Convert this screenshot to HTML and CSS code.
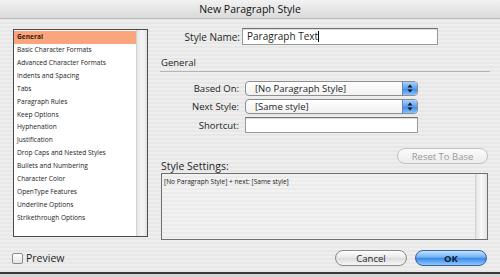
FILE: index.html
```html
<!DOCTYPE html>
<html lang="en">
<head>
  <meta charset="UTF-8">
  <title>New Paragraph Style</title>
  <link rel="stylesheet" href="styles.css">
</head>
<body>
  <div class="dialog">
    <div class="titlebar">New Paragraph Style</div>

    <div class="main">
      <!-- Category list -->
      <div class="list">
        <ul class="items">
          <li class="selected">General</li>
          <li>Basic Character Formats</li>
          <li>Advanced Character Formats</li>
          <li>Indents and Spacing</li>
          <li>Tabs</li>
          <li>Paragraph Rules</li>
          <li>Keep Options</li>
          <li>Hyphenation</li>
          <li>Justification</li>
          <li>Drop Caps and Nested Styles</li>
          <li>Bullets and Numbering</li>
          <li>Character Color</li>
          <li>OpenType Features</li>
          <li>Underline Options</li>
          <li>Strikethrough Options</li>
        </ul>
        <div class="track"></div>
      </div>

      <div class="panel">
        <div class="name-row">
          <label class="name-label">Style Name:</label>
          <div class="text-input name-input">Paragraph Text<span class="caret"></span></div>
        </div>

        <div class="section-title">General</div>

        <div class="form-row">
          <label class="field-label">Based On:</label>
          <div class="popup">
            <span class="popup-text">[No Paragraph Style]</span>
            <span class="popup-arrows">
              <svg width="6" height="9" viewBox="0 0 6 9"><polygon points="3,0.5 5.5,3.5 0.5,3.5" fill="#111"/><polygon points="0.5,5.5 5.5,5.5 3,8.5" fill="#111"/></svg>
            </span>
          </div>
        </div>
        <div class="form-row">
          <label class="field-label">Next Style:</label>
          <div class="popup">
            <span class="popup-text">[Same style]</span>
            <span class="popup-arrows">
              <svg width="6" height="9" viewBox="0 0 6 9"><polygon points="3,0.5 5.5,3.5 0.5,3.5" fill="#111"/><polygon points="0.5,5.5 5.5,5.5 3,8.5" fill="#111"/></svg>
            </span>
          </div>
        </div>
        <div class="form-row">
          <label class="field-label">Shortcut:</label>
          <div class="text-input shortcut-input"></div>
        </div>

        <div class="settings-head">
          <span class="settings-label">Style Settings:</span>
          <button class="btn btn-disabled">Reset To Base</button>
        </div>
        <div class="settings-box">
          <div class="settings-text">[No Paragraph Style] + next: [Same style]</div>
          <div class="settings-track"></div>
        </div>
      </div>
    </div>

    <div class="footer">
      <label class="preview"><span class="checkbox"></span>Preview</label>
      <div class="buttons">
        <button class="btn">Cancel</button>
        <button class="btn btn-default">OK</button>
      </div>
    </div>
  </div>
</body>
</html>
```

FILE: styles.css
```css
* {
  box-sizing: border-box;
  margin: 0;
  padding: 0;
}

body {
  width: 500px;
  height: 277px;
  background: #d6d6d6;
  font-family: 'Open Sans', 'DejaVu Sans', sans-serif;
  color: #1e1e1e;
  overflow: hidden;
}

.dialog {
  width: 500px;
  height: 274px;
  border-bottom: 2px solid #3a3a3a;
  background: repeating-linear-gradient(#eeeeee 0, #eeeeee 2px, #e7e7e7 2px, #e7e7e7 4px);
  display: flex;
  flex-direction: column;
}

.titlebar {
  height: 19px;
  line-height: 19px;
  text-align: center;
  font-size: 10.5px;
  font-weight: 500;
  color: #111;
  background: linear-gradient(#f2f2f2, #dadada);
  border-bottom: 1px solid #b8b8b8;
}

.main {
  display: flex;
  gap: 13px;
  padding: 10px 12px 0 13px;
}

/* left list */
.list {
  width: 135px;
  height: 208px;
  border: 1px solid #4a4a4a;
  background: #fff;
  display: flex;
}

.items {
  list-style: none;
  flex: 1;
  padding-top: 1px;
}

.items li {
  height: 12.93px;
  line-height: 12.93px;
  padding-left: 3px;
  font-size: 6.6px;
  font-weight: 500;
  color: #222;
  white-space: nowrap;
}

.items li.selected {
  background: #fba57c;
  color: #3a1a08;
  font-weight: 700;
}

.track {
  width: 11px;
  background: linear-gradient(90deg, #e4e4e4, #f6f6f6 50%, #e2e2e2);
  border-left: 1px solid #d2d2d2;
}

/* right panel */
.panel {
  width: 327px;
  display: flex;
  flex-direction: column;
}

.name-row {
  display: flex;
  align-items: center;
  margin-top: -1px;
}

.name-label {
  width: 81px;
  padding-right: 2px;
  text-align: right;
  font-size: 10px;
}

.text-input {
  background: #fff;
  border: 1px solid #9a9a9a;
  border-top-color: #707070;
  box-shadow: inset 0 1px 1px rgba(0, 0, 0, 0.15);
}

.name-input {
  width: 196px;
  height: 17px;
  line-height: 15px;
  padding-left: 4px;
  font-size: 10px;
}

.caret {
  display: inline-block;
  width: 1px;
  height: 11px;
  background: #000;
  vertical-align: -2px;
}

.section-title {
  margin-top: 11px;
  padding: 0 0 2px 1px;
  font-size: 9.5px;
  border-bottom: 1px solid #b4b4b4;
  margin-right: -2px;
  margin-left: -1px;
  margin-bottom: 9px;
}

.form-row {
  display: flex;
  align-items: center;
  gap: 6px;
  margin-bottom: 3px;
}

.field-label {
  width: 78px;
  text-align: right;
  font-size: 9.5px;
}

.popup {
  width: 173px;
  height: 15px;
  display: flex;
  background: linear-gradient(#ffffff, #f1f1f1);
  border: 1px solid #8e8e8e;
  border-radius: 4px;
  overflow: hidden;
}

.popup-text {
  flex: 1;
  padding-left: 9px;
  font-size: 9.5px;
  line-height: 13px;
}

.popup-arrows {
  width: 15px;
  display: flex;
  align-items: center;
  justify-content: center;
  background: linear-gradient(#a9d2fb, #5a9ff0 50%, #3b86e4 51%, #8cc4fa);
  border-left: 1px solid #5f86b8;
}

.shortcut-input {
  width: 173px;
  height: 16px;
}

.settings-head {
  display: flex;
  justify-content: space-between;
  align-items: flex-end;
  margin-top: 12px;
  height: 23px;
}

.settings-label {
  font-size: 10.5px;
  line-height: 12px;
  margin-bottom: -1px;
}

.btn {
  width: 72px;
  height: 16px;
  border: 1px solid #8a8a8a;
  border-radius: 8px;
  background: linear-gradient(#ffffff, #e6e6e6 50%, #dcdcdc 51%, #f6f6f6);
  font-family: 'Open Sans', 'DejaVu Sans', sans-serif;
  font-size: 9.5px;
  color: #1e1e1e;
}

.btn-disabled {
  width: 91px;
  align-self: flex-start;
  color: #9a9a9a;
  border-color: #c2c2c2;
  background: linear-gradient(#fbfbfb, #ececec);
}

.btn-default {
  font-weight: 700;
  color: #0e1e38;
  border-color: #3a62a0;
  background: linear-gradient(#c4e2fd, #6fb1f3 45%, #3a89e6 52%, #8ec8fb);
}

.settings-box {
  margin-top: 2px;
  height: 67px;
  border: 1px solid #6f6f6f;
  background: repeating-linear-gradient(#f2f2f2 0, #f2f2f2 2px, #ebebeb 2px, #ebebeb 4px);
  display: flex;
}

.settings-text {
  flex: 1;
  padding: 3px 0 0 2px;
  font-size: 6.6px;
}

.settings-track {
  width: 12px;
  background: linear-gradient(90deg, #e6e6e6, #f8f8f8 50%, #e4e4e4);
  border-left: 1px solid #d0d0d0;
}

/* footer */
.footer {
  display: flex;
  justify-content: space-between;
  align-items: center;
  height: 26px;
  margin-top: 5px;
  padding: 0 13px 0 12px;
}

.preview {
  display: flex;
  align-items: center;
  gap: 3px;
  font-size: 10.5px;
}

.checkbox {
  width: 11px;
  height: 11px;
  border: 1px solid #8a8a8a;
  border-radius: 2px;
  background: linear-gradient(#ffffff, #e4e4e4);
}

.buttons {
  display: flex;
  gap: 8px;
}
```
